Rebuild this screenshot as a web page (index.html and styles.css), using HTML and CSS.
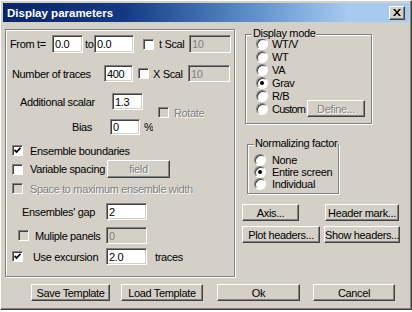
FILE: index.html
```html
<!DOCTYPE html>
<html lang="en">
<head>
    <meta charset="UTF-8">
    <title>Display parameters</title>
    <link rel="stylesheet" href="styles.css">
</head>
<body>
    <div class="dialog">
        <div class="titlebar">
            <span class="title">Display parameters</span>
            <span class="close-btn">
                <svg width="8" height="7" viewBox="0 0 8 7"><path d="M0 0h2l2 2.4L6 0h2L5 3.5 8 7H6L4 4.6 2 7H0l3-3.5z"/></svg>
            </span>
        </div>

        <div class="main">
            <!-- Left panel -->
            <div class="panel">
                <div class="row r1">
                    <span class="lbl l-from">From t=</span>
                    <input class="edit e-from" value="0.0">
                    <span class="lbl l-to">to</span>
                    <input class="edit e-to" value="0.0">
                    <span class="check c-t"></span>
                    <span class="lbl l-tscal">t Scal</span>
                    <input class="edit e-scal" value="10" disabled>
                </div>
                <div class="row r2">
                    <span class="lbl l-num">Number of traces</span>
                    <input class="edit e-num" value="400">
                    <span class="check c-x"></span>
                    <span class="lbl l-xscal">X Scal</span>
                    <input class="edit e-scal" value="10" disabled>
                </div>
                <div class="block">
                    <div class="col-left">
                        <div class="row r3">
                            <span class="lbl l-add">Additional scalar</span>
                            <input class="edit e-add" value="1.3">
                        </div>
                        <div class="row r-bias">
                            <span class="lbl l-bias">Bias</span>
                            <input class="edit e-bias" value="0">
                            <span class="lbl l-pct">%</span>
                        </div>
                    </div>
                    <div class="row rotate">
                        <span class="check off"></span>
                        <span class="lbl dim l-rot">Rotate</span>
                    </div>
                </div>
                <div class="row r-ens">
                    <span class="check c-left checked"><svg width="7" height="7" viewBox="0 0 7 7"><path d="M0.5 3l2 2 4-4.2" fill="none" stroke="#000" stroke-width="1.8"/></svg></span>
                    <span class="lbl l-after">Ensemble boundaries</span>
                </div>
                <div class="row r-var">
                    <span class="check c-left"></span>
                    <span class="lbl l-after l-var">Variable spacing</span>
                    <button class="btn b-field" disabled>field</button>
                </div>
                <div class="row r-space">
                    <span class="check c-left off"></span>
                    <span class="lbl l-after dim">Space to maximum ensemble width</span>
                </div>
                <div class="row r-gap">
                    <span class="lbl l-gap">Ensembles' gap</span>
                    <input class="edit e-wide" value="2">
                </div>
                <div class="row r-multi">
                    <span class="check c-multi off"></span>
                    <span class="lbl l-multi">Muliple panels</span>
                    <input class="edit e-wide" value="0" disabled>
                </div>
                <div class="row r-exc">
                    <span class="check c-left checked"><svg width="7" height="7" viewBox="0 0 7 7"><path d="M0.5 3l2 2 4-4.2" fill="none" stroke="#000" stroke-width="1.8"/></svg></span>
                    <span class="lbl l-exc">Use excursion</span>
                    <input class="edit e-wide" value="2.0">
                    <span class="lbl l-traces">traces</span>
                </div>
            </div>

            <!-- Right column -->
            <div class="right">
                <div class="group g-mode">
                    <span class="legend">Display mode</span>
                    <div class="opt"><span class="radio"></span><span class="opt-text">WT/V</span></div>
                    <div class="opt"><span class="radio"></span><span class="opt-text">WT</span></div>
                    <div class="opt"><span class="radio"></span><span class="opt-text">VA</span></div>
                    <div class="opt"><span class="radio on"></span><span class="opt-text">Grav</span></div>
                    <div class="opt"><span class="radio"></span><span class="opt-text">R/B</span></div>
                    <div class="opt">
                        <span class="radio"></span><span class="opt-text t-custom">Custom</span>
                        <button class="btn b-define" disabled>Define...</button>
                    </div>
                </div>

                <div class="group g-norm">
                    <span class="legend">Normalizing factor</span>
                    <div class="opt"><span class="radio"></span><span class="opt-text">None</span></div>
                    <div class="opt"><span class="radio on"></span><span class="opt-text">Entire screen</span></div>
                    <div class="opt"><span class="radio"></span><span class="opt-text">Individual</span></div>
                </div>

                <div class="btn-row first">
                    <button class="btn b-axis">Axis...</button>
                    <button class="btn b-mark">Header mark...</button>
                </div>
                <div class="btn-row">
                    <button class="btn b-plot">Plot headers...</button>
                    <button class="btn b-show">Show headers...</button>
                </div>
            </div>
        </div>

        <!-- Bottom buttons -->
        <div class="footer">
            <button class="btn b-save">Save Template</button>
            <button class="btn b-load">Load Template</button>
            <button class="btn b-ok">Ok</button>
            <button class="btn b-cancel">Cancel</button>
        </div>
    </div>
</body>
</html>
```

FILE: styles.css
```css
/* Page */
body {
    margin: 0;
    background: #fff;
    font-family: "Liberation Sans", Arial, sans-serif;
    font-size: 11px;
    letter-spacing: -0.35px;
    color: #000;
}

/* Window frame */
.dialog {
    width: 412px;
    height: 310px;
    box-sizing: border-box;
    background: #d4d0c8;
    border: 1px solid;
    border-color: #fff #404040 #404040 #fff;
    box-shadow: inset -1px -1px #808080;
}

.titlebar {
    margin: 2px 2px 0 2px;
    height: 19px;
    padding: 0 4px 0 4px;
    display: flex;
    align-items: center;
    justify-content: space-between;
    background: linear-gradient(to right, #0a246a, #143a84 30%, #5b8cc8 60%, #a6caf0 85%);
}

.title {
    color: #fff;
    font-weight: bold;
    font-size: 11.5px;
    letter-spacing: 0;
}

.close-btn {
    width: 16px;
    height: 14px;
    box-sizing: border-box;
    background: #d4d0c8;
    border: 1px solid;
    border-color: #fff #404040 #404040 #fff;
    box-shadow: inset -1px -1px #808080;
    display: flex;
    align-items: center;
    justify-content: center;
}

/* Layout */
.main {
    display: flex;
    padding: 7px 0 0 4px;
}

.panel {
    width: 230px;
    height: 248px;
    box-sizing: border-box;
    border: 1px solid #808080;
    box-shadow: inset 1px 1px #fff, 1px 1px #fff;
}

.row {
    display: flex;
    align-items: center;
}

.lbl {
    white-space: nowrap;
    overflow: hidden;
    flex-shrink: 0;
}

.dim {
    color: #808080;
    text-shadow: 1px 1px #fff;
}

/* Edit boxes */
.edit {
    box-sizing: border-box;
    height: 100%;
    margin: 0;
    padding: 0 2px;
    font: inherit;
    letter-spacing: inherit;
    color: #000;
    background: #fff;
    border: 1px solid;
    border-color: #808080 #fff #fff #808080;
    box-shadow: inset 1px 1px #404040, inset -1px -1px #d4d0c8;
    outline: none;
    flex-shrink: 0;
}

.edit:disabled {
    background: #d4d0c8;
    color: #808080;
    -webkit-text-fill-color: #808080;
}

/* Checkboxes */
.check {
    width: 11px;
    height: 11px;
    box-sizing: border-box;
    background: #fff;
    border: 1px solid;
    border-color: #808080 #fff #fff #808080;
    box-shadow: inset 1px 1px #404040;
    display: flex;
    align-items: center;
    justify-content: center;
    flex-shrink: 0;
}

.check.off {
    background: #d4d0c8;
}

/* Radio buttons */
.radio {
    width: 12px;
    height: 12px;
    box-sizing: border-box;
    border-radius: 50%;
    background: #fff;
    border: 1px solid;
    border-color: #808080 #fff #fff #808080;
    box-shadow: inset 1px 1px #404040;
    display: flex;
    align-items: center;
    justify-content: center;
    flex-shrink: 0;
}

.radio.on::after {
    content: "";
    width: 4px;
    height: 4px;
    border-radius: 50%;
    background: #000;
}

/* Buttons */
.btn {
    box-sizing: border-box;
    height: 17px;
    margin: 0;
    padding: 0;
    font: inherit;
    letter-spacing: inherit;
    color: #000;
    background: #d4d0c8;
    border: 1px solid;
    border-color: #fff #404040 #404040 #fff;
    box-shadow: inset -1px -1px #808080;
    white-space: nowrap;
    flex-shrink: 0;
}

.btn:disabled {
    color: #808080;
    text-shadow: 1px 1px #fff;
}

/* Row 1 */
.r1 { margin-top: 5px; height: 18px; }
.l-from { margin-left: 4px; width: 42px; }
.e-from { width: 31px; }
.l-to { margin-left: 2px; width: 9px; }
.e-to { width: 40px; }
.c-t { margin-left: 9px; }
.l-tscal { margin-left: 5px; width: 30px; }
.e-scal { width: 42px; }

/* Row 2 */
.r2 { margin-top: 12px; height: 17px; }
.l-num { margin-left: 6px; width: 92px; }
.e-num { width: 29px; }
.c-x { margin-left: 5px; }
.l-xscal { margin-left: 4px; width: 35px; }

/* Scalar / bias / rotate */
.block {
    display: flex;
    margin-top: 11px;
}

.col-left { width: 152px; }
.r3 { height: 17px; }
.l-add { margin-left: 14px; width: 92px; }
.e-add { width: 31px; }
.r-bias { margin-top: 9px; height: 16px; }
.l-bias { margin-left: 66px; width: 38px; }
.e-bias { width: 30px; }
.l-pct { margin-left: 4px; }

.rotate {
    align-self: flex-start;
    margin-top: 14px;
    height: 11px;
}
.l-rot { margin-left: 5px; }

/* Checkbox rows */
.c-left { margin-left: 6px; }
.l-after { margin-left: 7px; }
.r-ens { margin-top: 10px; height: 11px; }
.r-var { margin-top: 4px; height: 18px; }
.l-var { width: 77px; }
.b-field { width: 63px; height: 18px; }
.r-space { margin-top: 5px; height: 11px; }

.r-gap { margin-top: 9px; height: 17px; }
.l-gap { margin-left: 16px; width: 84px; }
.e-wide { width: 41px; }

.r-multi { margin-top: 7px; height: 17px; }
.c-multi { margin-left: 12px; }
.l-multi { margin-left: 6px; width: 71px; }

.r-exc { margin-top: 4px; height: 17px; }
.l-exc { margin-left: 10px; width: 73px; }
.l-traces { margin-left: 8px; }

/* Right column */
.right {
    margin-left: 7px;
    width: 160px;
}

.group {
    position: relative;
    box-sizing: border-box;
    border: 1px solid #808080;
    box-shadow: inset 1px 1px #fff, 1px 1px #fff;
}

.legend {
    position: absolute;
    top: -8px;
    left: 6px;
    padding: 0 1px;
    background: #d4d0c8;
    white-space: nowrap;
}

.opt {
    display: flex;
    align-items: center;
}

.g-mode {
    margin: 5px 0 0 3px;
    width: 127px;
    height: 90px;
    padding: 2px 0 0 10px;
}
.g-mode .opt { height: 13px; }
.g-mode .opt-text { margin-left: 4px; }
.t-custom { width: 35px; letter-spacing: -0.8px; white-space: nowrap; }
.b-define { width: 58px; height: 17px; }

.g-norm {
    margin: 20px 0 0 5px;
    width: 92px;
    height: 50px;
    padding: 9px 0 0 6px;
}
.g-norm .opt { height: 12px; }
.g-norm .opt-text { margin-left: 6px; }

.btn-row {
    display: flex;
    margin-top: 5px;
}
.btn-row.first { margin-top: 10px; }
.b-axis { width: 57px; }
.b-mark { width: 74px; margin-left: 26px; }
.b-plot { width: 78px; }
.b-show { width: 76px; margin-left: 4px; }

/* Footer buttons */
.footer {
    display: flex;
    padding: 7px 0 0 30px;
}
.b-save { width: 79px; }
.b-load { width: 82px; margin-left: 11px; }
.b-ok { width: 83px; margin-left: 14px; }
.b-cancel { width: 82px; margin-left: 13px; }
```
